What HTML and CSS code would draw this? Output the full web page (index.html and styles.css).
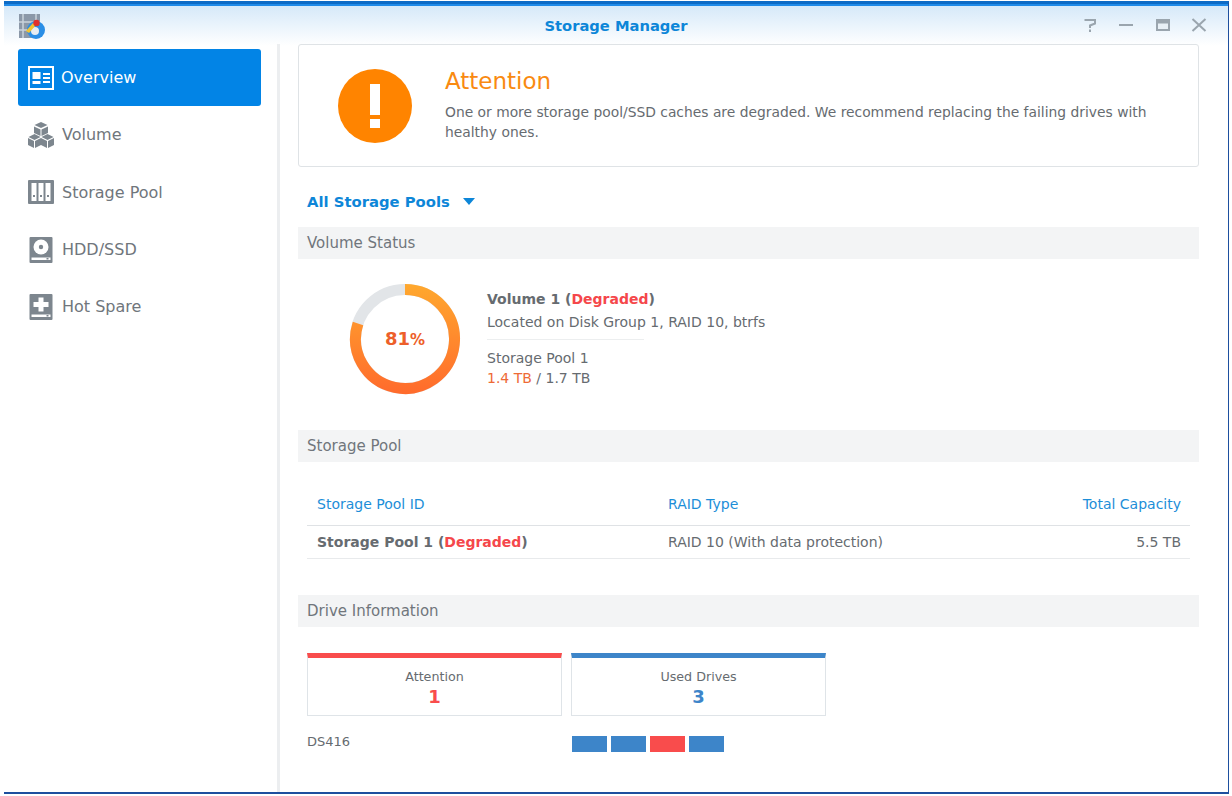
FILE: index.html
```html
<!DOCTYPE html>
<html lang="en">
<head>
<meta charset="utf-8">
<title>Storage Manager</title>
<link rel="stylesheet" href="styles.css">
</head>
<body>
<div class="window">
  <header class="titlebar">
    <svg class="app-icon" width="28" height="26" viewBox="0 0 28 26">
      <rect x="0" y="0" width="21" height="24" fill="#8b98a8"/>
      <path d="M0 8h21M0 16h21M4 0v24M17 0v24" stroke="#c9d2da" stroke-width="1.500" fill="none"/>
      <circle cx="17" cy="16" r="9" fill="#2a8ee6"/>
      <circle cx="16" cy="17" r="4" fill="#e6ecf2"/>
      <path d="M7 17l7-8 3 2-7 8z" fill="#f2c230"/>
      <circle cx="17.500" cy="9" r="3.200" fill="#e0302c"/>
    </svg>
    <h1 class="title">Storage Manager</h1>
    <div class="controls">
      <svg width="16" height="16" viewBox="0 0 16 16"><path d="M2.500 3h10.500v3.500L8 8.500V11M8 12.500v2.500" stroke="#9aa5ae" stroke-width="2" fill="none"/></svg>
      <svg width="16" height="16" viewBox="0 0 16 16"><path d="M1 8h14" stroke="#9aa5ae" stroke-width="2" fill="none"/></svg>
      <svg width="16" height="16" viewBox="0 0 16 16"><path d="M1 2h14v12H1z" fill="#9aa5ae"/><path d="M3 6.500h10V12H3z" fill="#e8f0f6"/></svg>
      <svg width="16" height="16" viewBox="0 0 16 16"><path d="M1.500 2l13 12M14.500 2l-13 12" stroke="#9aa5ae" stroke-width="2" fill="none"/></svg>
    </div>
  </header>
  <div class="body">
    <nav class="sidebar">
      <a class="nav-item active">
        <svg class="nav-icon" width="26" height="26" viewBox="0 -1 26 26"><rect x="1" y="1" width="24" height="22" fill="none" stroke="#fff" stroke-width="2"/><rect x="4.500" y="6" width="8" height="7" fill="#fff"/><path d="M4.500 15h8v3h-8z" fill="#fff"/><path d="M15 7h7v2h-7zM15 11h7v2h-7zM15 15h7v2h-7z" fill="#fff"/></svg>
        <span>Overview</span>
      </a>
      <a class="nav-item">
        <svg class="nav-icon" width="26" height="28" viewBox="0 0 26 28"><g fill="#7d868e"><path d="M13 1l6.500 3-6.500 3-6.500-3z"/><path d="M6 5.500l6.500 3V15l-6.500-3z"/><path d="M20 5.500l-6.500 3V15l6.500-3z"/><path d="M6.500 13l6 3-6 3-6-3z"/><path d="M19.500 13l6 3-6 3-6-3z"/><path d="M0 17l6 3v7l-6-3z"/><path d="M13 17l-6 3v7l6-3z"/><path d="M13 17l6 3v7l-6-3z"/><path d="M26 17l-6 3v7l6-3z"/></g></svg>
        <span>Volume</span>
      </a>
      <a class="nav-item">
        <svg class="nav-icon" width="26" height="24" viewBox="0 0 26 24"><rect width="26" height="24" rx="1" fill="#7d868e"/><path d="M3.500 3h5v18h-5zM10.500 3h5v18h-5zM17.500 3h5v18h-5z" fill="#fff"/><path d="M5 15h2v2H5zM12 15h2v2h-2zM19 15h2v2h-2z" fill="#7d868e"/></svg>
        <span>Storage Pool</span>
      </a>
      <a class="nav-item">
        <svg class="nav-icon" width="26" height="26" viewBox="-1.500 0 26 26"><rect width="23" height="26" rx="1" fill="#7d868e"/><circle cx="11.500" cy="10" r="7.500" fill="#fff"/><circle cx="11.500" cy="10" r="2.200" fill="#7d868e"/><path d="M2 20.500h19v2.500H2z" fill="#fff"/><path d="M17 21h2v1.500h-2z" fill="#7d868e"/></svg>
        <span>HDD/SSD</span>
      </a>
      <a class="nav-item">
        <svg class="nav-icon" width="26" height="26" viewBox="-1.500 0 26 26"><rect width="23" height="26" rx="1" fill="#7d868e"/><path d="M9 3.500h5v4.500h5v5h-5v4.500H9V13H4V8h5z" fill="#fff"/><path d="M2 20.500h19v2.500H2z" fill="#fff"/><path d="M17 21h2v1.500h-2z" fill="#7d868e"/></svg>
        <span>Hot Spare</span>
      </a>
    </nav>
    <main class="main">
      <section class="alert">
        <div class="alert-icon"><span class="bang"></span><span class="dot"></span></div>
        <div class="alert-text">
          <h2>Attention</h2>
          <p>One or more storage pool/SSD caches are degraded. We recommend replacing the failing drives with healthy ones.</p>
        </div>
      </section>
      <div class="filter"><span>All Storage Pools</span><i class="caret"></i></div>

      <h3 class="section-head">Volume Status</h3>
      <section class="volume">
        <div class="donut">
          <svg width="112" height="112" viewBox="0 0 112 112">
            <defs><linearGradient id="g" gradientUnits="userSpaceOnUse" x1="0" y1="0" x2="0" y2="112"><stop offset="0" stop-color="#ffa92e"/><stop offset="1" stop-color="#ff6a2c"/></linearGradient></defs>
            <circle cx="56" cy="56" r="49.500" fill="none" stroke="#e2e5e8" stroke-width="11"/>
            <path d="M56 6.500A49.500 49.500 0 1 1 9 40.500" fill="none" stroke="url(#g)" stroke-width="11"/>
          </svg>
          <div class="pct">81<small>%</small></div>
        </div>
        <div class="vol-info">
          <div class="vol-name">Volume 1 (<em>Degraded</em>)</div>
          <div class="vol-loc">Located on Disk Group 1, RAID 10, btrfs</div>
          <div class="vol-pool">Storage Pool 1</div>
          <div class="vol-size"><b>1.4 TB</b> / 1.7 TB</div>
        </div>
      </section>

      <h3 class="section-head">Storage Pool</h3>
      <table class="pool">
        <thead><tr><th>Storage Pool ID</th><th>RAID Type</th><th>Total Capacity</th></tr></thead>
        <tbody><tr><td class="pool-name">Storage Pool 1 (<em>Degraded</em>)</td><td>RAID 10 (With data protection)</td><td>5.5 TB</td></tr></tbody>
      </table>

      <h3 class="section-head">Drive Information</h3>
      <div class="cards">
        <div class="card red"><div class="card-label">Attention</div><div class="card-num">1</div></div>
        <div class="card blue"><div class="card-label">Used Drives</div><div class="card-num">3</div></div>
      </div>
      <div class="drives">
        <div class="ds">DS416</div>
        <div class="slots"><i class="slot"></i><i class="slot"></i><i class="slot bad"></i><i class="slot"></i></div>
      </div>
    </main>
  </div>
</div>
</body>
</html>
```
FILE: styles.css
```css
* { box-sizing: border-box; }
html, body { margin: 0; height: 100%; }
body { background: #fff; font-family: "DejaVu Sans", sans-serif; color: #666b70; overflow: hidden; }
.window { width: 1225px; height: 793px; margin: 1px 0 0 4px; padding-top: 2px; border-top: 3px solid #0d6bc6; border-bottom: 2px solid #1e4f9e; border-right: 1px solid #1e4f9e; box-shadow: inset 0 2px 0 #1f8ae8; display: flex; flex-direction: column; background: linear-gradient(#d6e9f9 2px, #fff 42px) no-repeat; }
.titlebar { height: 38px; display: flex; align-items: center; justify-content: center; position: relative; flex: none; }
.title { margin: 0; font-size: 14.700px; font-weight: 700; color: #0d86d8; }
.app-icon { position: absolute; left: 15px; top: 8px; }
.controls { position: absolute; right: 21px; top: 11px; display: flex; gap: 20.500px; }
.body { flex: 1; display: flex; min-height: 0; }
.sidebar { width: 276px; flex: none; padding: 5px 16px 0 14px; border-right: 3px solid #eceef0; display: flex; flex-direction: column; }
.nav-item { height: 57.300px; flex: none; display: flex; align-items: center; padding-left: 10px; border-radius: 3px; font-size: 16px; color: #70767c; gap: 8px; }
.nav-item.active { background: #0284e6; color: #fff; gap: 7px; }
.nav-icon { flex: none; }
.main { flex: 1; padding: 0 29px 0 18px; min-width: 0; }
.alert { height: 123px; border: 1px solid #dfe3e6; border-radius: 3px; display: flex; align-items: center; padding-left: 39px; gap: 33px; }
.alert-icon { width: 74px; height: 74px; border-radius: 50%; background: #ff8400; display: flex; flex-direction: column; align-items: center; justify-content: center; flex: none; gap: 4px; }
.bang { width: 10px; height: 31px; background: #fff; }
.dot { width: 10px; height: 9px; background: #fff; }
.alert-text { flex: 1; padding-right: 40px; margin-top: -3px; }
.alert-text h2 { margin: 0 0 6px; font-size: 23px; line-height: 30px; font-weight: 400; color: #f98a11; }
.alert-text p { margin: 0; font-size: 13.850px; line-height: 20px; }
.filter { height: 60px; display: flex; align-items: center; gap: 13px; padding: 8px 0 0 9px; font-size: 14.800px; font-weight: 700; color: #0d86d8; }
.caret { width: 0; height: 0; border-left: 6px solid transparent; border-right: 6px solid transparent; border-top: 7px solid #0d86d8; }
.section-head { margin: 0; height: 32px; line-height: 33px; background: #f3f4f5; padding-left: 9px; font-size: 15px; font-weight: 400; color: #70767c; }
.volume { height: 171px; display: flex; align-items: flex-start; padding: 24px 0 0 51px; }
.donut { position: relative; width: 112px; height: 112px; flex: none; }
.pct { position: absolute; inset: 0; display: flex; align-items: baseline; justify-content: center; line-height: 112px; font-size: 18px; font-weight: 700; color: #ed5f2a; }
.pct small { font-size: 15px; font-weight: 700; }
.vol-info { margin-left: 26px; font-size: 14px; line-height: 20px; padding-top: 6px; }
.vol-name { font-weight: 700; height: 23px; }
.vol-name em, .pool-name em { font-style: normal; color: #f5474b; }
.vol-loc { height: 28px; position: relative; }
.vol-loc::after { content: ""; position: absolute; left: 0; bottom: 0; width: 157px; height: 1px; background: #eceeef; }
.vol-pool { margin-top: 8px; }
.vol-size b { font-weight: 400; color: #ee6a36; }
.pool { width: calc(100% - 18px); margin: 24px 0 36px 9px; border-collapse: collapse; font-size: 14px; }
.pool th { font-weight: 400; color: #1d8ed8; height: 39px; text-align: left; border-bottom: 1px solid #dfe2e5; padding: 0 0 2px 10px; }
.pool td { height: 33px; border-bottom: 1px solid #e8eaec; padding: 0 0 0 10px; }
.pool th:nth-child(1), .pool td:nth-child(1) { width: 351px; }
.pool th:last-child, .pool td:last-child { text-align: right; padding-left: 0; padding-right: 9px; }
.pool-name { font-weight: 700; }
.cards { display: flex; gap: 9px; padding: 26px 0 0 9px; }
.card { width: 255px; height: 63px; border: 1px solid #dfe4e8; border-top: 5px solid; text-align: center; padding-top: 10px; }
.card.red { border-top-color: #f94c4c; }
.card.blue { border-top-color: #3d85c9; }
.card-label { font-size: 12.700px; line-height: 17px; }
.card-num { font-size: 18px; font-weight: 700; line-height: 24px; }
.red .card-num { color: #f94c4c; }
.blue .card-num { color: #3d85c9; }
.drives { display: flex; padding: 17px 0 0 9px; font-size: 13px; }
.ds { width: 265px; line-height: 18px; }
.slots { display: flex; gap: 4px; margin-top: 3px; }
.slot { width: 35px; height: 16px; background: #3d85c9; }
.slot.bad { background: #f94c4c; }
```
